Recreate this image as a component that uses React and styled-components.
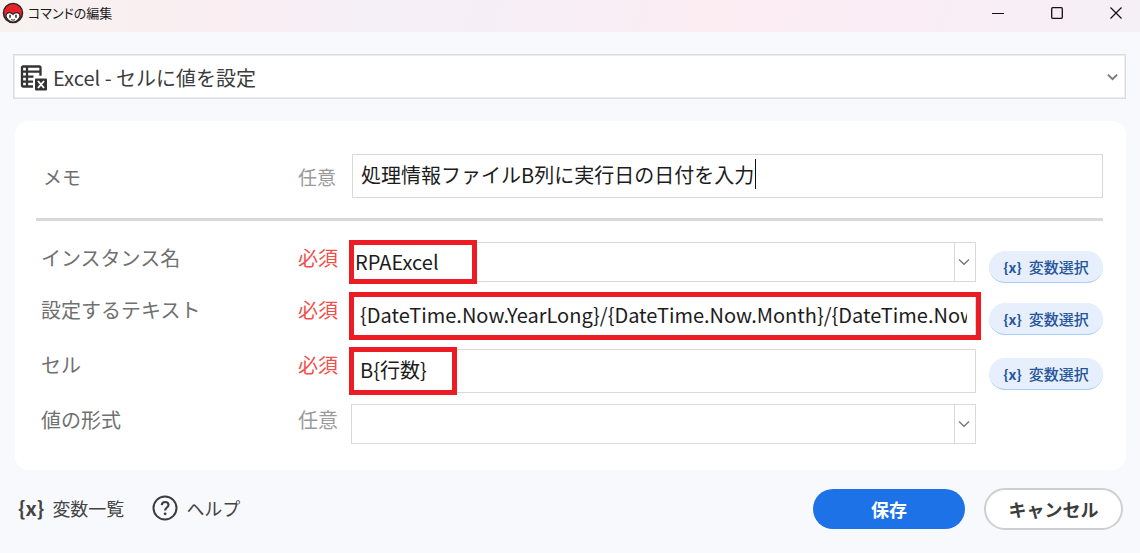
import React, { useState } from "react";
import styled, { createGlobalStyle } from "styled-components";

const GlobalStyle = createGlobalStyle`
  *, *::before, *::after { box-sizing: border-box; }
  body {
    margin: 0;
    background: #f7f9fd;
    font-family: "Noto Sans CJK JP", "Noto Sans", sans-serif;
    font-size: 20px;
    color: #3c3c3c;
  }
  button, input, select { font: inherit; color: inherit; margin: 0; }
`;

const Window = styled.div`
  display: flex;
  flex-direction: column;
  min-height: 100vh;
`;

const TitleBar = styled.header`
  display: flex;
  align-items: center;
  height: 32px;
  padding: 0 1px 7px 2px;
  background: linear-gradient(100deg, #f7f2f0 0%, #faeef2 20%, #f5eff7 32%, #f7eef6 48%, #fbedf2 62%, #faedf5 80%, #f5f0f5 100%);
`;

const Title = styled.h1`
  flex: 1;
  margin: 0 0 0 4px;
  font-size: 13px;
  line-height: 20px;
  font-weight: 400;
  font-feature-settings: "palt";
  color: #1a1a1a;
`;

const WindowButtons = styled.div`
  display: flex;
  gap: 12px;
`;

const WindowButton = styled.button`
  display: grid;
  place-items: center;
  width: 47px;
  height: 24px;
  padding: 0;
  border: 0;
  background: none;
  color: #111;
`;

const Main = styled.main`
  display: flex;
  flex-direction: column;
  gap: 22px;
  padding: 22px 14px 0 13px;
`;

const CommandPicker = styled.label`
  position: relative;
  display: block;
`;

const CommandSelect = styled.select`
  display: block;
  width: 100%;
  height: 45px;
  padding: 2px 40px 0 39px;
  border: 1px solid #dcdcde;
  outline: 1px solid #ececee;
  outline-offset: -2px;
  border-radius: 0;
  background: #fff;
  appearance: none;
`;

const CommandIcon = styled.span`
  position: absolute;
  left: 7px;
  top: 11px;
  display: flex;
  pointer-events: none;
`;

const CommandArrow = styled.span`
  position: absolute;
  right: 8px;
  top: 0;
  bottom: 0;
  display: flex;
  align-items: center;
  pointer-events: none;
  color: #777;
`;

const Card = styled.section`
  margin-left: 2px;
  padding: 33px 23px 26px 21px;
  border-radius: 14px;
  background: #fff;
`;

const Row = styled.div`
  display: grid;
  grid-template-columns: 257px 53px minmax(0, 1fr) 114px;
  align-items: start;
  padding-left: 5px;
`;

const MemoRow = styled(Row)`
  grid-template-columns: 257px 54px minmax(0, 1fr);
  align-items: center;
  padding-bottom: 20px;
  border-bottom: 3px solid #d9d9d9;
`;

const Rows = styled.div`
  display: flex;
  flex-direction: column;
  gap: 11px;
  padding-top: 21px;
`;

const Label = styled.label`
  color: #707070;
  font-size: ${(p) => (p.$small ? 19 : 20)}px;
  line-height: 32px;
  padding: ${(p) => (p.$small ? "2px 0 0 2px" : 0)};
`;

const Need = styled.span`
  color: ${(p) => (p.$required ? "#f0504c" : "#9a9a9a")};
  font-size: ${(p) => (p.$small ? 19 : 20)}px;
  line-height: 32px;
  padding-top: ${(p) => (p.$small ? 2 : 0)}px;
`;

const Field = styled.div`
  position: relative;
  margin-right: ${(p) => (p.$wide ? 0 : 13)}px;
`;

const TextInput = styled.input`
  display: block;
  width: 100%;
  height: 44px;
  padding: 0 8px 4px;
  border: 1px solid #d9d9d9;
  border-radius: 0;
  background: #fff;
  color: #1c1c1c;
  outline: none;
`;

const Caret = styled.span`
  position: absolute;
  left: 403px;
  top: 5px;
  width: 1px;
  height: 30px;
  background: #111;
`;

const ComboSelect = styled.select`
  display: block;
  width: 100%;
  height: 40px;
  padding: 0 24px 2px 3px;
  border: 1px solid #d9d9d9;
  border-radius: 0;
  background: #fff;
  color: #1c1c1c;
  appearance: none;
  outline: none;
`;

const ComboArrow = styled.span`
  position: absolute;
  right: 1px;
  top: 1px;
  bottom: 1px;
  display: flex;
  align-items: center;
  width: 21px;
  padding-left: 3px;
  border-left: 1px solid #d9d9d9;
  color: #777;
  pointer-events: none;
`;

const Highlight = styled.span`
  position: absolute;
  top: -2px;
  bottom: -2px;
  left: -2px;
  ${(p) => (p.$width ? `width: ${p.$width}px;` : "right: -5px;")}
  border: 5px solid #ed1c24;
  pointer-events: none;
`;

const VariableButton = styled.button`
  display: flex;
  align-items: center;
  justify-content: center;
  gap: 7px;
  height: 32px;
  margin-top: 9px;
  padding: 0;
  border: 0;
  border-bottom: 1px solid #a9cdfa;
  border-radius: 16px;
  background: #e7effc;
  color: #24559a;
  font-size: 15px;
  line-height: 24px;
  font-weight: 500;
`;

const Braces = styled.b`
  font-weight: 700;
  font-size: ${(p) => (p.$large ? 20 : 14)}px;
`;

const Footer = styled.footer`
  display: flex;
  align-items: center;
  padding: 18px 17px 24px 18px;
`;

const FooterLink = styled.button`
  display: flex;
  align-items: center;
  gap: 8px;
  margin-right: 28px;
  padding: 0 0 2px;
  border: 0;
  background: none;
  color: #444;
  font-size: 18px;
  line-height: 26px;
`;

const Actions = styled.div`
  display: flex;
  align-items: center;
  gap: 19px;
  margin-left: auto;
`;

const SaveButton = styled.button`
  width: 152px;
  height: 40px;
  padding: 0;
  border: 0;
  border-radius: 20px;
  background: #1d72e8;
  color: #fff;
  font-size: 18px;
  font-weight: 700;
`;

const CancelButton = styled(SaveButton)`
  width: 139px;
  height: 42px;
  border: 2px solid #cfcfcf;
  border-radius: 21px;
  background: #fff;
  color: #3c3c3c;
`;

const Chevron = ({ width, stroke }) => (
  <svg width={width} height="8" viewBox="0 0 12 8" fill="none" stroke="currentColor" strokeWidth={stroke} aria-hidden="true">
    <path d="M1 1.5 6 6.3 11 1.5" />
  </svg>
);

const MascotIcon = () => (
  <svg width="22" height="22" viewBox="0 0 22 22" aria-hidden="true">
    <circle cx="11" cy="11" r="9.6" fill="#e8202a" stroke="#2b2422" strokeWidth="1.4" />
    <path d="M4 14.5C4 12 5.400 10.600 7.500 10.600c1.600 0 2.700.7 3.500 1.800.8-1.100 1.900-1.800 3.500-1.800 2.100 0 3.500 1.400 3.500 3.900-1.200 3.400-3.800 5.500-7 5.500s-5.800-2.100-7-5.500Z" fill="#fff" stroke="#2b2422" strokeWidth="1.200" />
    <path d="M8 12.800v3M14 12.800v3" stroke="#2b2422" strokeWidth="1.500" />
    <path d="M9 17.600q2 1.200 4 0" stroke="#2b2422" fill="none" />
  </svg>
);

const SheetIcon = () => (
  <svg width="28" height="26" viewBox="0 0 28 26" fill="none" aria-hidden="true">
    <path d="M20.500 10.800V2.500a1 1 0 0 0-1-1H3a1 1 0 0 0-1 1v18a1 1 0 0 0 1 1h10M1.500 6.600h19M7 1.500v20M2 11.600h11.500M2 16.600h11" stroke="#343434" strokeWidth="2.300" />
    <rect x="15" y="13.500" width="12" height="12" rx="1" fill="#343434" />
    <path d="m18 16 6 7M24 16l-6 7" stroke="#fff" strokeWidth="1.900" />
  </svg>
);

const HelpIcon = () => (
  <svg width="26" height="26" viewBox="0 0 26 26" fill="none" stroke="#3c3c3c" aria-hidden="true">
    <circle cx="13" cy="13" r="11.500" strokeWidth="2" />
    <path d="M9.700 10.200c.2-2 1.600-3.200 3.500-3.200 1.900 0 3.300 1.200 3.300 2.900 0 2.500-3.400 2.700-3.400 5.600" strokeWidth="2.100" />
    <circle cx="13.100" cy="18.800" r="1.400" fill="#3c3c3c" stroke="none" />
  </svg>
);

const VariablePicker = () => (
  <VariableButton type="button">
    <Braces>{"{x}"}</Braces>変数選択
  </VariableButton>
);

export default function App() {
  const [memo, setMemo] = useState("処理情報ファイルB列に実行日の日付を入力");
  const [text, setText] = useState("{DateTime.Now.YearLong}/{DateTime.Now.Month}/{DateTime.Now.Day}");
  const [cell, setCell] = useState("B{行数}");

  return (
    <Window>
      <GlobalStyle />
      <TitleBar>
        <MascotIcon />
        <Title>コマンドの編集</Title>
        <WindowButtons>
          <WindowButton type="button" aria-label="最小化">
            <svg width="12" height="12"><path d="M0 6.500h12" stroke="currentColor" /></svg>
          </WindowButton>
          <WindowButton type="button" aria-label="最大化">
            <svg width="12" height="12"><rect x=".7" y=".7" width="10.600" height="10.600" rx="1" fill="none" stroke="currentColor" strokeWidth="1.300" /></svg>
          </WindowButton>
          <WindowButton type="button" aria-label="閉じる">
            <svg width="12" height="12"><path d="m.5.5 11 11m0-11-11 11" stroke="currentColor" strokeWidth="1.200" /></svg>
          </WindowButton>
        </WindowButtons>
      </TitleBar>

      <Main>
        <CommandPicker>
          <CommandSelect aria-label="コマンド">
            <option>Excel - セルに値を設定</option>
          </CommandSelect>
          <CommandIcon><SheetIcon /></CommandIcon>
          <CommandArrow><Chevron width={11} stroke={2} /></CommandArrow>
        </CommandPicker>

        <Card>
          <MemoRow>
            <Label $small htmlFor="memo">メモ</Label>
            <Need $small>任意</Need>
            <Field $wide>
              <TextInput id="memo" value={memo} onChange={(e) => setMemo(e.target.value)} />
              <Caret />
            </Field>
          </MemoRow>

          <Rows>
            <Row>
              <Label htmlFor="instance">インスタンス名</Label>
              <Need $required>必須</Need>
              <Field>
                <ComboSelect id="instance"><option>RPAExcel</option></ComboSelect>
                <ComboArrow><Chevron width={12} stroke={1.3} /></ComboArrow>
                <Highlight $width={128} />
              </Field>
              <VariablePicker />
            </Row>
            <Row>
              <Label htmlFor="text">設定するテキスト</Label>
              <Need $required>必須</Need>
              <Field>
                <TextInput id="text" value={text} onChange={(e) => setText(e.target.value)} />
                <Highlight />
              </Field>
              <VariablePicker />
            </Row>
            <Row>
              <Label htmlFor="cell">セル</Label>
              <Need $required>必須</Need>
              <Field>
                <TextInput id="cell" value={cell} onChange={(e) => setCell(e.target.value)} />
                <Highlight $width={108} />
              </Field>
              <VariablePicker />
            </Row>
            <Row>
              <Label htmlFor="format">値の形式</Label>
              <Need>任意</Need>
              <Field>
                <ComboSelect id="format"><option></option></ComboSelect>
                <ComboArrow><Chevron width={12} stroke={1.3} /></ComboArrow>
              </Field>
            </Row>
          </Rows>
        </Card>
      </Main>

      <Footer>
        <FooterLink type="button"><Braces $large>{"{x}"}</Braces>変数一覧</FooterLink>
        <FooterLink type="button"><HelpIcon />ヘルプ</FooterLink>
        <Actions>
          <SaveButton type="button">保存</SaveButton>
          <CancelButton type="button">キャンセル</CancelButton>
        </Actions>
      </Footer>
    </Window>
  );
}
